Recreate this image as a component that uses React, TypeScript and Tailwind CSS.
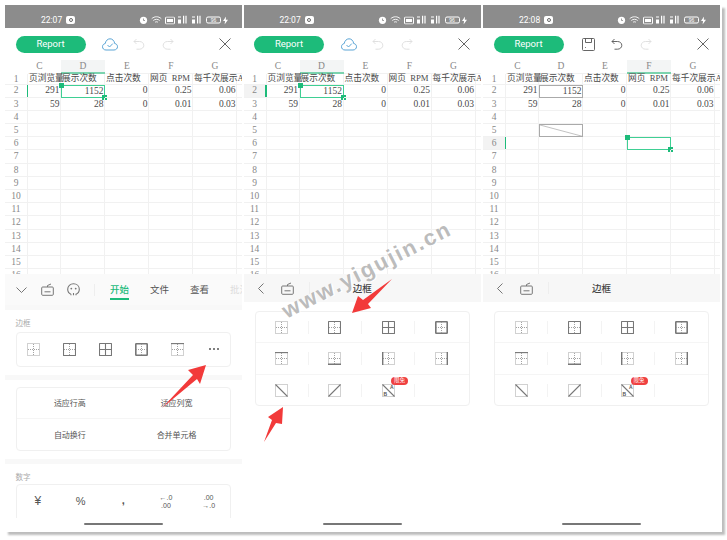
import React from 'react';

const COLS = ['C', 'D', 'E', 'F', 'G'];
const ROWS: string[][] = [
  ['页浏览量', '展示次数', '点击次数', '网页|RPM', '每千次展示A'],
  ['291', '1152', '0', '0.25', '0.06'],
  ['59', '28', '0', '0.01', '0.03'],
];
const ALL_ROWS = Array.from({ length: 16 }, (_, i) => i + 1);

const BorderIcon = ({ kind }: { kind: string }) => {
  const dash = { stroke: '#999', strokeWidth: 0.9, strokeDasharray: '1 1', fill: 'none' };
  const solid = { stroke: '#777', strokeWidth: 1.1, fill: 'none' };
  const thick = { stroke: '#777', strokeWidth: 1.6, fill: 'none' };
  const outerSolid = kind === 'outer' || kind === 'all';
  const plain = kind === 'outer' || kind === 'all' || kind === 'thick';
  const diagonal = kind === 'down' || kind === 'up' || kind === 'ab';
  return (
    <svg width="13" height="13" viewBox="0 0 13 13" className="block">
      {!plain && <rect x="0.5" y="0.5" width="12" height="12" {...dash} />}
      {outerSolid && <rect x="0.5" y="0.5" width="12" height="12" rx="0.5" {...solid} />}
      {kind === 'thick' && <rect x="0.8" y="0.8" width="11.4" height="11.4" rx="0.5" {...thick} />}
      {kind === 'all' ? (
        <path d="M6.5 0.5V12.5M0.5 6.5H12.5" {...solid} />
      ) : !diagonal ? (
        <path d="M6.5 1V12M1 6.5H12" {...dash} />
      ) : null}
      {kind === 'top' && <path d="M0 0.6H13" {...solid} />}
      {kind === 'bottom' && <path d="M0 12.3H13" {...thick} />}
      {kind === 'left' && <path d="M0.6 0V13" {...thick} />}
      {kind === 'right' && <path d="M12.4 0V13" {...thick} />}
      {(kind === 'down' || kind === 'ab') && <path d="M0.5 0.5L12.5 12.5" {...solid} />}
      {kind === 'up' && <path d="M0.5 12.5L12.5 0.5" {...solid} />}
      {kind === 'ab' && (
        <>
          <text x="8" y="5" fontSize="5" fontWeight="700" fill="#555" fontFamily="Liberation Sans">A</text>
          <text x="1.5" y="11.5" fontSize="5" fontWeight="700" fill="#555" fontFamily="Liberation Sans">B</text>
        </>
      )}
    </svg>
  );
};

const KeyboardIcon = () => (
  <svg width="13" height="13" viewBox="0 0 13 13" fill="none" stroke="#777" strokeWidth="1" className="block">
    <rect x="0.7" y="4" width="11.6" height="8.3" rx="1" />
    <path d="M3.5 8.8H9.5M6.5 4V2.5L10 1" />
  </svg>
);

const FaceIcon = () => (
  <svg width="13" height="13" viewBox="0 0 13 13" fill="none" stroke="#777" strokeWidth="1.1" className="block">
    <path d="M4 11.2C1 10 0.7 7.5 0.7 6.2C0.7 3 3.2 0.8 6.5 0.8C9.8 0.8 12.3 3 12.3 6.2C12.3 7.5 12 10 9 11.2V12.2M4 11.2V12.2M6.5 10V12.2" />
    <circle cx="4.3" cy="5.6" r="0.9" fill="#777" stroke="none" />
    <circle cx="8.7" cy="5.6" r="0.9" fill="#777" stroke="none" />
  </svg>
);

const StatusIcons = () => (
  <div className="flex items-center gap-[2px] ml-[66px] text-white">
    <svg width="9" height="9" viewBox="0 0 9 9" className="block"><circle cx="4.5" cy="4.8" r="3.6" fill="#fff" /><path d="M4.5 3V5H6" stroke="#888" strokeWidth="0.8" fill="none" /></svg>
    <svg width="11" height="9" viewBox="0 0 11 9" fill="none" stroke="#fff" strokeWidth="0.9" className="block ml-[1px]"><path d="M0.7 3.2C3.5 0.6 7.5 0.6 10.3 3.2M2.3 5C4 3.4 7 3.4 8.7 5M4 6.8C4.8 6.1 6.2 6.1 7 6.8" /></svg>
    <svg width="10" height="8" viewBox="0 0 10 8" className="block ml-[1px]"><rect x="0.5" y="0.5" width="9" height="7" rx="1" fill="none" stroke="#fff" /><rect x="2" y="2.5" width="6" height="3" fill="#fff" /></svg>
    <svg width="10" height="9" viewBox="0 0 10 9" fill="#fff" className="block ml-[1px]"><rect x="0" y="1" width="3" height="1" /><rect x="0" y="4" width="3" height="4" /><rect x="5" y="0" width="1.2" height="8" /><rect x="7.4" y="0" width="1.2" height="8" /></svg>
    <svg width="10" height="9" viewBox="0 0 10 9" fill="#fff" className="block ml-[2px]"><rect x="0" y="1" width="3" height="1" /><rect x="0" y="4" width="3" height="4" /><rect x="5" y="0" width="1.2" height="8" /><rect x="7.4" y="0" width="1.2" height="8" /></svg>
    <div className="ml-[2px] w-[15px] h-[7px] rounded-[2px] border border-white flex items-center justify-center text-[5px] leading-none font-['Liberation_Sans']">96</div>
    <svg width="5" height="8" viewBox="0 0 5 8" fill="#fff" className="block"><path d="M3 0L0 4.6H2L1.6 8L5 3.2H2.8Z" /></svg>
  </div>
);

const Sheet = ({ step }: { step: number }) => {
  const activeCol = step === 3 ? 'F' : 'D';
  const activeRow = step === 3 ? 6 : 2;
  return (
    <div className="h-[214px] shrink-0 overflow-hidden font-['Liberation_Serif','Noto_Sans_CJK_SC',serif] text-[#4a4a4a]">
      <div className="grid grid-cols-[23px_33px_44px_44px_44px_44px_20px] grid-rows-[14px_10.5px_repeat(15,13.2px)]">
        <div />
        {COLS.map((c) => (
          <div
            key={c}
            className={`flex items-center justify-center text-[9.5px] text-[#888] ${c === 'C' ? 'pr-[10px]' : ''} ${
              c === activeCol ? 'bg-[#f3f5f5] border-b-2 border-[#7bd3ae]' : 'border-b border-[#f1f1f1]'
            }`}
          >
            {c}
          </div>
        ))}
        <div className="border-b border-[#f1f1f1]" />
        {ALL_ROWS.map((r) => {
          const values = ROWS[r - 1] || ['', '', '', '', ''];
          return (
            <React.Fragment key={r}>
              <div
                className={`relative flex items-center justify-center text-[9.5px] text-[#888] border-r border-b border-[#f1f1f1] ${
                  r === activeRow && step !== 1 ? 'bg-[#f3f3f3]' : ''
                }`}
              >
                {r}
                {r === activeRow && <span className="absolute right-[-1px] top-0 bottom-0 w-[1.5px] bg-[#1dbb7a]" />}
              </div>
              {values.map((v, i) => {
                const selected = COLS[i] === activeCol && r === activeRow;
                const oldBox = step === 3 && COLS[i] === 'D' && r === 2;
                const diagonal = step === 3 && COLS[i] === 'D' && r === 5;
                return (
                  <div
                    key={i}
                    className={`relative flex items-center whitespace-nowrap border-r border-b ${
                      r === 1 ? 'justify-start pl-[1px] text-[8.7px]' : 'justify-end pr-[0.5px] text-[9.5px]'
                    } ${
                      selected
                        ? 'border border-[#3fcf94]'
                        : oldBox || diagonal
                          ? 'border border-[#aaa]'
                          : 'border-[#f1f1f1]'
                    }`}
                  >
                    {v.includes('|') ? (
                      <span className="flex w-full justify-between pr-[2px]">
                        {v.split('|').map((part) => (
                          <span key={part}>{part}</span>
                        ))}
                      </span>
                    ) : (
                      v
                    )}
                    {selected && (
                      <>
                        <span className="absolute -left-[3px] -top-[3px] w-[5px] h-[5px] bg-[#1dbb7a]" />
                        <span className="absolute -right-[3px] -bottom-[3px] w-[5px] h-[5px] bg-[#1dbb7a]" />
                      </>
                    )}
                    {diagonal && (
                      <svg className="absolute inset-0 w-full h-full" viewBox="0 0 44 13" preserveAspectRatio="none">
                        <path d="M0 0L44 13" stroke="#aaa" strokeWidth="0.8" fill="none" />
                      </svg>
                    )}
                  </div>
                );
              })}
              <div className="border-b border-[#f1f1f1]" />
            </React.Fragment>
          );
        })}
      </div>
    </div>
  );
};

const Toolbar = ({ step }: { step: number }) => (
  <div className="h-[32px] shrink-0 flex items-center pl-[10.5px] pr-[11px] bg-white">
    <div className="w-[70px] h-[17px] rounded-full bg-[#1dbb7a] flex items-center justify-center text-[9.5px] text-white font-['Roboto',sans-serif]">
      Report
    </div>
    <div className="ml-[10px] w-[29px] flex justify-center">
      {step === 3 ? (
        <svg width="13" height="13" viewBox="0 0 13 13" fill="none" stroke="#555" strokeWidth="0.9" className="block">
          <path d="M1.5 0.5H11.5A1 1 0 0 1 12.5 1.5V11.5A1 1 0 0 1 11.5 12.5H1.5A1 1 0 0 1 0.5 11.5V1.5A1 1 0 0 1 1.5 0.5Z" />
          <path d="M3.5 0.5V4.5H9.5V0.5M3 9.5H3.8" />
        </svg>
      ) : (
        <svg width="16" height="13" viewBox="0 0 16 13" fill="none" stroke="#4a9bd0" strokeWidth="0.9" className="block">
          <path d="M4 12C1.8 12 0.5 10.5 0.5 8.7C0.5 7 1.7 5.8 3.2 5.6C3.7 2.8 5.6 0.8 8 0.8C10.5 0.8 12.3 2.8 12.7 5.5C14.4 5.8 15.5 7 15.5 8.7C15.5 10.5 14 12 12 12Z" />
          <path d="M5.5 7L7.5 9L10.8 5.6" />
        </svg>
      )}
    </div>
    <div className="w-[29px] flex justify-center">
      <svg width="12" height="12" viewBox="0 0 12 12" fill="none" stroke={step === 3 ? '#555' : '#ddd'} strokeWidth="0.9" className="block">
        <path d="M3.5 1L1 3.5L3.5 6M1 3.5H6.5C9 3.5 10.8 5.2 10.8 7.3C10.8 9.5 9 11.2 6.5 11.2H3.5" />
      </svg>
    </div>
    <div className="w-[29px] flex justify-center">
      <svg width="12" height="12" viewBox="0 0 12 12" fill="none" stroke="#ddd" strokeWidth="0.9" className="block">
        <path d="M8.5 1L11 3.5L8.5 6M11 3.5H5.5C3 3.5 1.2 5.2 1.2 7.3C1.2 9.5 3 11.2 5.5 11.2H8.5" />
      </svg>
    </div>
    <svg width="12" height="12" viewBox="0 0 12 12" fill="none" stroke="#555" strokeWidth="0.9" className="block ml-auto">
      <path d="M0.5 0.5L11.5 11.5M11.5 0.5L0.5 11.5" />
    </svg>
  </div>
);

const HomePanel = () => (
  <div className="flex-1 min-h-0 overflow-hidden bg-[#f8f8f8] font-['Noto_Sans_CJK_SC',sans-serif]">
    <div className="h-[31px] bg-[#fafafa] flex items-center relative">
      <svg width="11" height="6" viewBox="0 0 11 6" fill="none" stroke="#666" strokeWidth="0.9" className="block ml-[11px] shrink-0">
        <path d="M0.5 0.5L5.5 5.5L10.5 0.5" />
      </svg>
      <div className="ml-[14px] shrink-0"><KeyboardIcon /></div>
      <div className="ml-[13px] shrink-0"><FaceIcon /></div>
      <div className="ml-[14px] w-px h-[12px] bg-[#eee] shrink-0" />
      <div className="relative ml-[15px] text-[9.5px] font-medium text-[#1dbb7a] shrink-0">
        开始
        <span className="absolute left-0 right-0 top-[16px] h-[1.5px] bg-[#1dbb7a]" />
      </div>
      <div className="ml-[21px] text-[9.5px] text-[#555] shrink-0">文件</div>
      <div className="ml-[21px] text-[9.5px] text-[#555] shrink-0">查看</div>
      <div className="ml-[21px] text-[9.5px] text-[#ddd] shrink-0">批注</div>
    </div>

    <div className="mt-[5px] h-[65px] bg-white px-[10.5px] pt-[8px]">
      <div className="text-[7.5px] leading-[10px] text-[#aaa]">边框</div>
      <div className="mt-[3.5px] h-[35px] rounded-[4px] border border-[#f0f0f0] flex items-center">
        {['none', 'outer', 'all', 'thick', 'top'].map((k) => (
          <div key={k} className={`w-[36px] shrink-0 flex justify-center ${k === 'none' ? '-ml-[1px]' : ''}`}>
            <BorderIcon kind={k} />
          </div>
        ))}
        <div className="w-[36px] shrink-0 flex justify-center gap-[2px]">
          <span className="w-[2px] h-[2px] rounded-full bg-[#555]" />
          <span className="w-[2px] h-[2px] rounded-full bg-[#555]" />
          <span className="w-[2px] h-[2px] rounded-full bg-[#555]" />
        </div>
      </div>
    </div>

    <div className="mt-[5px] h-[79px] bg-white px-[10.5px] pt-[7px]">
      <div className="h-[64px] rounded-[4px] border border-[#f0f0f0] grid grid-cols-2 grid-rows-2 text-[8px] text-[#555]">
        <div className="flex items-center justify-center border-b border-[#f5f5f5]">适应行高</div>
        <div className="flex items-center justify-center border-b border-[#f5f5f5]">适应列宽</div>
        <div className="flex items-center justify-center">自动换行</div>
        <div className="flex items-center justify-center">合并单元格</div>
      </div>
    </div>

    <div className="mt-[5px] h-[60px] bg-white px-[10.5px] pt-[8px]">
      <div className="text-[7.5px] leading-[10px] text-[#aaa]">数字</div>
      <div className="mt-[2px] h-[50px] rounded-[4px] border border-[#f0f0f0] grid grid-cols-5 pt-[9px] items-start justify-items-center text-[#555] font-['Liberation_Sans',sans-serif]">
        <span className="text-[12px] leading-[14px]">¥</span>
        <span className="text-[11px] leading-[14px]">%</span>
        <span className="text-[11px] leading-[12px] font-bold">,</span>
        <span className="text-[7px] leading-[7.5px] text-center">←.0<br />.00</span>
        <span className="text-[7px] leading-[7.5px] text-center">.00<br />→.0</span>
      </div>
    </div>
  </div>
);

const BorderPanel = () => {
  const rows = [
    ['none', 'outer', 'all', 'thick'],
    ['top', 'bottom', 'left', 'right'],
    ['down', 'up', 'ab', ''],
  ];
  return (
    <div className="flex-1 min-h-0 bg-white font-['Noto_Sans_CJK_SC',sans-serif]">
      <div className="h-[28px] bg-[#f7f7f7] flex items-center relative">
        <svg width="6" height="11" viewBox="0 0 6 11" fill="none" stroke="#666" strokeWidth="0.9" className="block ml-[14px]">
          <path d="M5.5 0.5L0.5 5.5L5.5 10.5" />
        </svg>
        <div className="ml-[17px]"><KeyboardIcon /></div>
        <div className="ml-[15px] w-px h-[12px] bg-[#eee]" />
        <div className="absolute inset-x-0 text-center text-[9.5px] font-medium text-[#444]">边框</div>
      </div>
      <div className="mt-[9px] mx-[11px] w-[215px] h-[95px] rounded-[4px] border border-[#f0f0f0]">
        {rows.map((row, i) => (
          <div key={i} className={`h-[31.3px] grid grid-cols-4 items-center ${i < 2 ? 'border-b border-[#f5f5f5]' : ''}`}>
            {row.map((k, j) => (
              <div key={j} className={`relative flex justify-center ${j < 3 ? 'border-r border-[#f3f3f3]' : ''}`}>
                {k && <BorderIcon kind={k} />}
                {k === 'ab' && (
                  <span className="absolute left-[29px] -top-[7px] h-[8px] w-[17px] rounded-full bg-[#ef4040] flex items-center justify-center text-[5.5px] leading-none text-white">
                    限免
                  </span>
                )}
              </div>
            ))}
          </div>
        ))}
      </div>
    </div>
  );
};

const Phone = ({ step, time, width }: { step: number; time: string; width: string }) => (
  <div className={`${width} h-[524px] shrink-0 flex flex-col overflow-hidden bg-white`}>
    <div className="h-[23px] shrink-0 bg-[#8c8c8c] flex items-end pb-[3px] pl-[36px] text-white">
      <span className="w-[20px] text-[8.5px] leading-[10px] font-['Roboto',sans-serif]">{time}</span>
      <span className="ml-[5px] w-[9px] h-[8px] mb-[1px] rounded-[2px] bg-white flex items-center justify-center">
        <span className="w-[4px] h-[4px] rounded-full border border-[#666]" />
      </span>
      <div className="-ml-[2px] -translate-y-[0.5px]"><StatusIcons /></div>
    </div>
    <Toolbar step={step} />
    <Sheet step={step} />
    {step === 1 ? <HomePanel /> : <BorderPanel />}
    <div className="h-[11px] shrink-0 bg-white pt-[5px]">
      <div className="mx-auto w-[79px] h-[2px] rounded-full bg-[#777]" />
    </div>
  </div>
);

export default function App() {
  return (
    <div className="relative w-[727px] h-[540px] overflow-hidden bg-white pl-[5px] pt-[5px]">
      <div className="flex gap-[2px] w-[717px] h-[526.5px] bg-white shadow-[3px_3px_2px_#bdbdbd]">
        <Phone step={1} time="22:07" width="w-[236.5px]" />
        <Phone step={2} time="22:07" width="w-[237.5px]" />
        <Phone step={3} time="22:08" width="w-[237px]" />
      </div>

      <div className="absolute left-[367px] top-[270px] -translate-x-1/2 -translate-y-1/2 -rotate-[27deg] whitespace-nowrap font-['Liberation_Sans',sans-serif] font-bold text-[22px] leading-none tracking-[2px] text-[#aaaaaa]/80 [text-shadow:1px_1px_0_#fff]">
        www.yigujin.cn
      </div>

      <svg className="absolute inset-0 pointer-events-none" width="727" height="540" viewBox="0 0 727 540">
        <polygon points="206,365 188,370 193,375 162,408 197,379 200,384" fill="#f23a3a" />
        <polygon points="352,313 358,296 363,300 392,279 368,304 371,308" fill="#f23a3a" />
        <polygon points="283,407 268,417 272,420 264,442 276,423 282,424" fill="#f23a3a" />
      </svg>
    </div>
  );
}
